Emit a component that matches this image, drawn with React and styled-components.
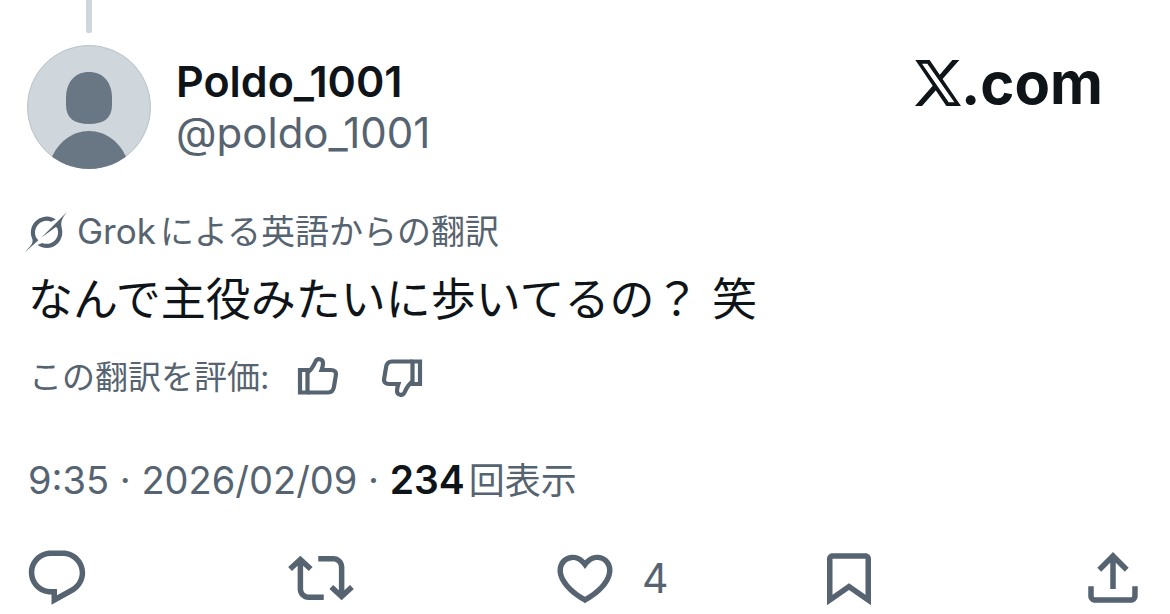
import React from 'react';
import styled, {createGlobalStyle} from 'styled-components';

const GlobalStyle = createGlobalStyle`
    body {
        margin: 0;
        background-color: #ffffff;
        color: #0f1419;
        font-family: Inter, "Noto Sans CJK JP", sans-serif;
    }
`;

const Post = styled.article`
    display: flex;
    flex-direction: column;
    padding: 0 24px 2px;
`;

const ThreadLine = styled.div`
    width: 6px;
    height: 33px;
    margin-left: 62px;
    border-radius: 0 0 2px 2px;
    background-color: #cfd6dc;
`;

const Header = styled.header`
    display: flex;
    align-items: flex-start;
    gap: 25px;
    margin-top: 12px;
    padding: 0 43px 0 3px;
`;

const Avatar = styled.svg`
    flex: none;
    width: 124px;
    height: 124px;
`;

const Names = styled.div`
    display: flex;
    flex-direction: column;
    flex: 1;
    padding-top: 10px;
`;

const NameLink = styled.a`
    color: ${(props) => props.$muted ? "#566370" : "#0f1419"};
    font-size: ${(props) => props.$muted ? 42 : 43}px;
    font-weight: ${(props) => props.$muted ? 400 : 600};
    line-height: 52px;
    text-decoration: none;
`;

const Brand = styled.a`
    display: flex;
    align-items: center;
    padding-top: 8px;
    color: #0f1419;
    font-size: 58px;
    font-weight: 700;
    line-height: 60px;
    text-decoration: none;
`;

const BrandIcon = styled.svg`
    width: 46px;
    height: 46px;
`;

const Translation = styled.div`
    display: flex;
    align-items: center;
    gap: 10px;
    margin-top: 40px;
    padding-left: 1px;
    color: #566370;
    font-size: 34px;
    line-height: 44px;
`;

const GrokIcon = styled.svg`
    width: 42px;
    height: 42px;
`;

const GrokName = styled.span`
    margin-right: 4px;
    font-size: 35px;
`;

const Body = styled.p`
    margin: 16px 0 0;
    padding-left: 4px;
    font-size: 45px;
    line-height: 60px;
`;

const Rating = styled.div`
    display: flex;
    align-items: center;
    gap: 24px;
    margin-top: 23px;
    padding-left: 5px;
    color: #566370;
    font-size: 33px;
    line-height: 48px;
`;

const IconButton = styled.button`
    display: flex;
    align-items: center;
    width: ${(props) => props.$size}px;
    height: ${(props) => props.$size}px;
    padding: 0;
    border: none;
    background: none;
    color: #566370;
    font: inherit;
    cursor: pointer;

    > svg {
        flex: none;
        width: ${(props) => props.$size}px;
        height: ${(props) => props.$size}px;
    }
`;

const Meta = styled.div`
    margin-top: 53px;
    padding-left: 4px;
    color: #566370;
    font-size: 38px;
    line-height: 52px;
`;

const Views = styled.a`
    color: inherit;
    font-size: 36px;
    text-decoration: none;
`;

const ViewCount = styled.strong`
    margin-right: 4px;
    color: #0f1419;
    font-size: 39px;
    font-weight: 600;
`;

const Actions = styled.div`
    display: flex;
    justify-content: space-between;
    margin-top: 38px;
`;

const Count = styled.span`
    margin-left: 24px;
    font-size: 41px;
    line-height: 48px;
`;

const ACTIONS = [
    {
        label: '返信',
        path: 'M1.751 10c0-4.42 3.584-8 8.005-8h4.366c4.49 0 8.129 3.64 8.129 8.13 0 2.96-1.607 5.68-4.196 7.11l-8.054 4.46v-3.69h-.067c-4.49.1-8.183-3.51-8.183-8.01zm8.005-6c-3.317 0-6.005 2.69-6.005 6 0 3.37 2.77 6.08 6.138 6.01l.351-.01h1.761v2.3l5.087-2.81c1.951-1.08 3.163-3.13 3.163-5.36 0-3.39-2.744-6.13-6.129-6.13H9.756z',
    },
    {
        label: 'リポスト',
        path: 'M4.5 3.88l4.432 4.14-1.364 1.46L5.5 7.55V16c0 1.1.896 2 2 2H13v2H7.5c-2.209 0-4-1.79-4-4V7.55L1.432 9.48.068 8.02 4.5 3.88zM16.5 6H11V4h5.5c2.209 0 4 1.79 4 4v8.45l2.068-1.93 1.364 1.46-4.432 4.14-4.432-4.14 1.364-1.46 2.068 1.93V8c0-1.1-.896-2-2-2z',
    },
    {
        label: 'いいね',
        count: 4,
        path: 'M16.697 5.5c-1.222-.06-2.679.51-3.89 2.16l-.805 1.09-.806-1.09C9.984 6.01 8.526 5.44 7.304 5.5c-1.243.07-2.349.78-2.91 1.91-.552 1.12-.633 2.78.479 4.82 1.074 1.97 3.257 4.27 7.129 6.61 3.87-2.34 6.052-4.64 7.126-6.61 1.111-2.04 1.03-3.7.477-4.82-.561-1.13-1.666-1.84-2.908-1.91zm4.187 7.69c-1.351 2.48-4.001 5.12-8.379 7.67l-.503.3-.504-.3c-4.379-2.55-7.029-5.19-8.382-7.67-1.36-2.5-1.41-4.86-.514-6.67.887-1.79 2.647-2.91 4.601-3.01 1.651-.09 3.368.56 4.798 2.01 1.429-1.45 3.146-2.1 4.796-2.01 1.954.1 3.714 1.22 4.601 3.01.896 1.81.846 4.17-.514 6.67z',
    },
    {
        label: 'ブックマーク',
        path: 'M4 5c0-1.1.9-2 2-2h12c1.1 0 2 .9 2 2v16.94l-8-5.550-8 5.550V5zm2 0v13.120l6-4.170 6 4.170V5H6z',
    },
    {
        label: '共有',
        path: 'M12 2.59l5.7 5.7-1.41 1.42L13 6.41V16h-2V6.41l-3.3 3.3-1.41-1.42L12 2.59zM21 15l-.02 3.51c0 1.38-1.12 2.49-2.5 2.49H5.5C4.11 21 3 19.88 3 18.5V15h2v3.5c0 .28.22.5.5.5h12.98c.28 0 .5-.22.5-.5L19 15h2z',
    },
];

const Thumb = () => (
    <svg viewBox="0 0 44 44" fill="none" stroke="currentColor" strokeWidth="4.200" aria-hidden="true">
        <path d="M6 15h7.500v22.500H6z"/>
        <path d="M13.500 17.500c4-2.500 6-6.500 8-11 1.800-4 7.500-2.600 7.500 1.500 0 2.800-.6 4.800-1.400 7H37c3.600 0 5.400 2 4.900 5l-2 12c-.6 3.400-2.400 5.500-5.900 5.500H13.500"/>
    </svg>
);

const ThumbDown = styled(IconButton)`
    transform: rotate(180deg);
    margin-left: 20px;
`;

export default function App() {
    return (
        <>
            <GlobalStyle/>
            <Post>
                <ThreadLine/>
                <Header>
                    <Avatar viewBox="0 0 124 124" role="img" aria-label="Poldo_1001">
                        <clipPath id="avatar">
                            <circle cx="62" cy="62" r="62"/>
                        </clipPath>
                        <g clipPath="url(#avatar)">
                            <rect width="124" height="124" fill="#cfd6dc"/>
                            <circle cx="62" cy="62" r="61.5" fill="none" stroke="#bcc4cb"/>
                            <path fill="#697785" d="M62 27c14 0 23 10 23 26v7c0 13-8 19-23 19s-23-6-23-19v-7c0-16 9-26 23-26z"/>
                            <path fill="#697785" d="M24 114c7-17 21-28 38-28s31 11 38 28v10H24z"/>
                        </g>
                    </Avatar>
                    <Names>
                        <NameLink href="#profile">Poldo_1001</NameLink>
                        <NameLink href="#profile" $muted>@poldo_1001</NameLink>
                    </Names>
                    <Brand href="#home" aria-label="X.com">
                        <BrandIcon viewBox="0 0 138 138" aria-hidden="true">
                            <g fill="currentColor">
                                <path fillRule="evenodd" d="M1 0h43l94 138H94zM21 11l80 116h17L37 11z"/>
                                <path d="M112 0h21L82 58l-9-12zM0 138h21l45-51-9-14z"/>
                            </g>
                        </BrandIcon>
                        .com
                    </Brand>
                </Header>
                <Translation>
                    <GrokIcon viewBox="0 0 24 24" aria-hidden="true">
                        <path
                            fill="currentColor"
                            d="M9.27 15.29l7.978-5.897c.391-.29.95-.177 1.137.272.98 2.369.542 5.215-1.41 7.169-1.951 1.954-4.667 2.382-7.149 1.406l-2.711 1.257c3.889 2.661 8.611 2.003 11.562-.953 2.341-2.344 3.066-5.539 2.388-8.42l.006.007c-.983-4.232.242-5.924 2.75-9.383.06-.082.12-.164.179-.248l-3.301 3.305v-.01L9.267 15.292M7.623 16.723c-2.792-2.67-2.31-6.801.071-9.184 1.761-1.763 4.647-2.483 7.166-1.425l2.705-1.25a7.808 7.808 0 00-1.829-1A8.975 8.975 0 005.984 5.83c-2.533 2.536-3.33 6.436-1.962 9.764 1.022 2.487-.653 4.246-2.34 6.022-.599.63-1.199 1.259-1.682 1.925l7.62-6.815"
                        />
                    </GrokIcon>
                    <span><GrokName>Grok</GrokName>による英語からの翻訳</span>
                </Translation>
                <Body>なんで主役みたいに歩いてるの？ 笑</Body>
                <Rating>
                    <span>この翻訳を評価:</span>
                    <IconButton $size={44} aria-label="良い翻訳"><Thumb/></IconButton>
                    <ThumbDown $size={44} aria-label="悪い翻訳"><Thumb/></ThumbDown>
                </Rating>
                <Meta>
                    <time dateTime="2026-02-09T09:35">9:35 · 2026/02/09</time>
                    {' · '}
                    <Views href="#views"><ViewCount>234</ViewCount>回表示</Views>
                </Meta>
                <Actions>
                    {ACTIONS.map(({label, path, count}) => (
                        <IconButton key={label} $size={66} aria-label={label}>
                            <svg viewBox="0 0 24 24" fill="currentColor" aria-hidden="true">
                                <path d={path}/>
                            </svg>
                            {count ? <Count>{count}</Count> : null}
                        </IconButton>
                    ))}
                </Actions>
            </Post>
        </>
    );
}
